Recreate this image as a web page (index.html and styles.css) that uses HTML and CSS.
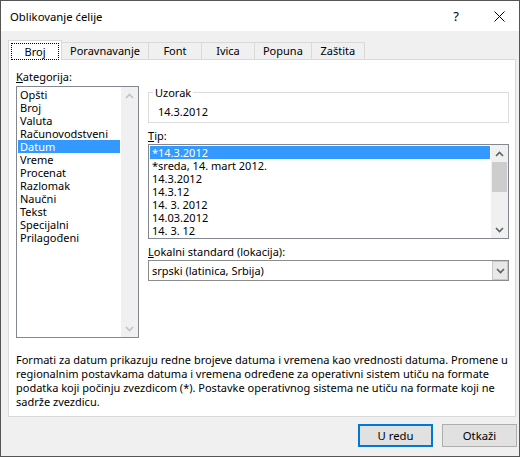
FILE: index.html
```html
<!DOCTYPE html>
<html lang="sr">
<head>
    <meta charset="UTF-8">
    <title>Oblikovanje ćelije</title>
    <link rel="stylesheet" href="styles.css">
</head>
<body>
    <div class="dialog">
        <div class="titlebar">
            <span class="title">Oblikovanje ćelije</span>
            <span class="help">?</span>
            <span class="close">
                <svg width="11" height="11" viewBox="0 0 11 11"><path d="M0.5 0.5 L10.5 10.5 M10.5 0.5 L0.5 10.5" stroke="#000" stroke-width="1" fill="none"/></svg>
            </span>
        </div>

        <div class="content">
            <div class="tabs">
                <div class="tab active"><span class="focus">Broj</span></div>
                <div class="tab">Poravnavanje</div>
                <div class="tab">Font</div>
                <div class="tab">Ivica</div>
                <div class="tab">Popuna</div>
                <div class="tab">Zaštita</div>
            </div>

            <div class="panel">
                <div class="panel-main">
                    <div class="col-left">
                        <div class="label"><u>K</u>ategorija:</div>
                        <div class="listbox cat-list">
                            <ul class="items">
                                <li>Opšti</li>
                                <li>Broj</li>
                                <li>Valuta</li>
                                <li>Računovodstveni</li>
                                <li class="sel">Datum</li>
                                <li>Vreme</li>
                                <li>Procenat</li>
                                <li>Razlomak</li>
                                <li>Naučni</li>
                                <li>Tekst</li>
                                <li>Specijalni</li>
                                <li>Prilagođeni</li>
                            </ul>
                            <div class="scrollbar disabled">
                                <div class="sb-btn"><svg width="9" height="6" viewBox="0 0 9 6"><polyline points="1,5 4.5,1.5 8,5"/></svg></div>
                                <div class="sb-track"></div>
                                <div class="sb-btn"><svg width="9" height="6" viewBox="0 0 9 6"><polyline points="1,1 4.5,4.5 8,1"/></svg></div>
                            </div>
                        </div>
                    </div>

                    <div class="col-right">
                        <fieldset class="sample">
                            <legend>Uzorak</legend>
                            <div class="sample-value">14.3.2012</div>
                        </fieldset>

                        <div class="label gap"><u>T</u>ip:</div>
                        <div class="listbox type-list">
                            <ul class="items">
                                <li class="sel">*14.3.2012</li>
                                <li>*sreda, 14. mart 2012.</li>
                                <li>14.3.2012</li>
                                <li>14.3.12</li>
                                <li>14. 3. 2012</li>
                                <li>14.03.2012</li>
                                <li>14. 3. 12</li>
                            </ul>
                            <div class="scrollbar">
                                <div class="sb-btn"><svg width="9" height="6" viewBox="0 0 9 6"><polyline points="1,5 4.5,1.5 8,5"/></svg></div>
                                <div class="sb-track"><div class="sb-thumb"></div></div>
                                <div class="sb-btn"><svg width="9" height="6" viewBox="0 0 9 6"><polyline points="1,1 4.5,4.5 8,1"/></svg></div>
                            </div>
                        </div>

                        <div class="label gap"><u>L</u>okalni standard (lokacija):</div>
                        <div class="combo">
                            <span class="combo-text">srpski (latinica, Srbija)</span>
                            <span class="combo-btn"><svg width="9" height="6" viewBox="0 0 9 6"><polyline points="1,1 4.5,4.5 8,1"/></svg></span>
                        </div>
                    </div>
                </div>

                <!-- line breaks follow the original dialog -->
                <p class="desc">Formati za datum prikazuju redne brojeve datuma i vremena kao vrednosti datuma. Promene u<br>
                regionalnim postavkama datuma i vremena određene za operativni sistem utiču na formate<br>
                podatka koji počinju zvezdicom (*). Postavke operativnog sistema ne utiču na formate koji ne<br>
                sadrže zvezdicu.</p>
            </div>

            <div class="buttons">
                <button class="btn default">U redu</button>
                <button class="btn">Otkaži</button>
            </div>
        </div>
    </div>
</body>
</html>
```

FILE: styles.css
```css
/* Dialog frame */
* {
    box-sizing: border-box;
}

body {
    margin: 0;
    font-family: "Noto Sans", "DejaVu Sans", sans-serif;
    font-size: 11px;
    color: #000;
    background: #fff;
}

.dialog {
    width: 520px;
    height: 457px;
    border: 1px solid #555;
    background: #f0f0f0;
    display: flex;
    flex-direction: column;
}

.titlebar {
    height: 30px;
    background: #fff;
    display: flex;
    align-items: center;
    padding-left: 9px;
    font-size: 11.3px;
}

.title {
    flex: 1;
}

.help {
    width: 20px;
    text-align: center;
    font-size: 13px;
    margin-right: 13px;
}

.close {
    width: 40px;
    display: flex;
    justify-content: center;
}

.content {
    flex: 1;
    display: flex;
    flex-direction: column;
}

/* Tabs */
.tabs {
    display: flex;
    align-items: flex-end;
    padding: 9px 0 0 7px;
    margin-bottom: -1px;
}

.tab {
    height: 18px;
    min-width: 54px;
    padding: 0 8px;
    border: 1px solid #d9d9d9;
    border-bottom: none;
    margin-left: -1px;
    text-align: center;
    line-height: 16px;
    background: #f0f0f0;
}

.tab:first-child {
    margin-left: 0;
}

.tab.active {
    height: 20px;
    padding: 2px 2px 0;
    background: #fff;
    position: relative;
    z-index: 1;
}

.tab .focus {
    display: block;
    border: 1px dotted #000;
    padding: 0 12px;
    line-height: 15px;
}

/* Panel */
.panel {
    margin: 0 3px 0 7px;
    border: 1px solid #d9d9d9;
    background: #fff;
    padding: 10px 5px 7px 7px;
}

.panel-main {
    display: flex;
    gap: 9px;
}

.col-left {
    width: 123px;
}

.col-right {
    width: 361px;
    padding-top: 16px;
}

.label {
    line-height: 13px;
    margin-bottom: 3px;
}

.label.gap {
    margin-top: 6px;
    margin-bottom: 2px;
}

.listbox {
    border: 1px solid #828790;
    display: flex;
    overflow: hidden;
}

.cat-list {
    height: 252px;
}

.type-list {
    height: 95px;
}

.items {
    list-style: none;
    margin: 0 1px 0 0;
    padding: 1px 0 0 1px;
    flex: 1;
}

.items li {
    line-height: 13px;
    height: 13px;
    padding-left: 2px;
    white-space: nowrap;
}

.items li.sel {
    background: #3399ff;
    color: #fff;
}

.scrollbar {
    width: 17px;
    background: #f0f0f0;
    display: flex;
    flex-direction: column;
}

.sb-btn {
    height: 17px;
    display: flex;
    align-items: center;
    justify-content: center;
}

.sb-btn svg polyline,
.combo-btn svg polyline {
    fill: none;
    stroke: #606060;
    stroke-width: 1.6;
}

.scrollbar.disabled .sb-btn svg polyline {
    stroke: #c2c2c2;
}

.sb-track {
    flex: 1;
}

.sb-thumb {
    height: 30px;
    margin: 0 1px;
    background: #cdcdcd;
}

/* Sample group */
.sample {
    margin: 0;
    padding: 0 4px 4px;
    border: 1px solid #dcdcdc;
}

.sample legend {
    padding: 0 2px;
    line-height: 13px;
}

.sample-value {
    margin: 6px 0 0 5px;
    line-height: 13px;
}

/* Combo box */
.combo {
    height: 21px;
    border: 1px solid #8c8c8c;
    display: flex;
    align-items: center;
    padding: 0 0 0 3px;
}

.combo-text {
    flex: 1;
}

.combo-btn {
    width: 16px;
    height: 19px;
    background: #e8e8e8;
    border: 1px solid #c8c8c8;
    display: flex;
    align-items: center;
    justify-content: center;
}

.desc {
    margin: 15px 0 0;
    line-height: 14px;
    white-space: nowrap;
}

/* Buttons */
.buttons {
    display: flex;
    justify-content: flex-end;
    gap: 9px;
    padding: 7px 2px 0 0;
}

.btn {
    width: 75px;
    height: 23px;
    font-family: inherit;
    font-size: 11.3px;
    background: #e1e1e1;
    border: 1px solid #adadad;
    padding: 0;
}

.btn.default {
    border: 2px solid #0078d7;
}
```
